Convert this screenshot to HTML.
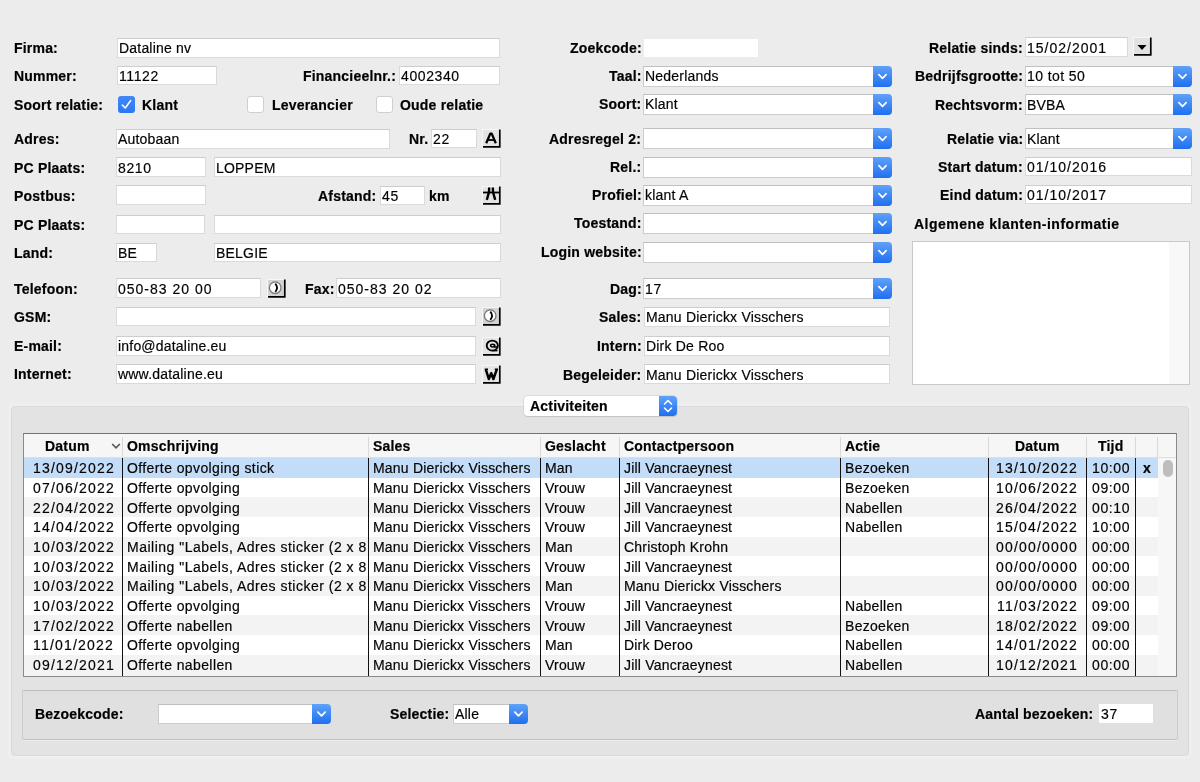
<!DOCTYPE html>
<html><head><meta charset="utf-8"><style>
html,body{margin:0;padding:0}
body{width:1200px;height:782px;overflow:hidden;position:relative;background:#ececec;font-family:"Liberation Sans", sans-serif;font-size:14px;color:#000}
.t{position:absolute;white-space:nowrap;will-change:transform;line-height:20px;font-size:14px;letter-spacing:0.2px}
.b{-webkit-text-stroke:0.2px #000}
.r{-webkit-text-stroke:0.2px #111}
.inp{position:absolute;box-sizing:border-box;background:#fff;border:1px solid #dadada;border-top-color:#cdcdcd}
.inpn{position:absolute;box-sizing:border-box;background:#fff}
.ddw{position:absolute;box-sizing:border-box;background:#fff;border:1px solid #cdcdcd;border-top-color:#c0c0c0;border-right:none}
.ddb{position:absolute;box-sizing:border-box;background:linear-gradient(#5fa2f9,#1f6ff0);border-radius:0 4px 4px 0;}
.ddb svg{position:absolute;left:0;top:0}
.cbc{position:absolute;width:17px;height:17px;border-radius:3px;background:linear-gradient(#3f89f7,#2c78f3)}
.cbc svg{position:absolute;left:0;top:0}
.cbu{position:absolute;box-sizing:border-box;width:17px;height:17px;border-radius:3px;background:#fff;border:1px solid #cfcfcf}
.ib{position:absolute;box-sizing:border-box;background:#dedede;border-left:2px solid #fafafa;border-top:2px solid #fafafa;border-right:2px solid #000;border-bottom:2px solid #000}
.ib svg{position:absolute;left:0;top:0}
.sep{position:absolute;width:1px;background:#111}
.hsep{position:absolute;width:1px;background:#d9d9d9}
</style></head><body>

<div class="t b" style="left:14px;top:38px;font-weight:bold;">Firma:</div>
<div class="t b" style="left:14px;top:66px;font-weight:bold;">Nummer:</div>
<div class="t b" style="left:14px;top:95px;font-weight:bold;">Soort relatie:</div>
<div class="t b" style="left:14px;top:129px;font-weight:bold;">Adres:</div>
<div class="t b" style="left:14px;top:158px;font-weight:bold;">PC Plaats:</div>
<div class="t b" style="left:14px;top:186px;font-weight:bold;">Postbus:</div>
<div class="t b" style="left:14px;top:215px;font-weight:bold;">PC Plaats:</div>
<div class="t b" style="left:14px;top:243px;font-weight:bold;">Land:</div>
<div class="t b" style="left:14px;top:279px;font-weight:bold;">Telefoon:</div>
<div class="t b" style="left:14px;top:307px;font-weight:bold;">GSM:</div>
<div class="t b" style="left:14px;top:336px;font-weight:bold;">E-mail:</div>
<div class="t b" style="left:14px;top:364px;font-weight:bold;">Internet:</div>
<div class="inp" style="left:117px;top:38px;width:383px;height:20px"></div>
<div class="t r" style="left:119px;top:38px;font-weight:normal;">Dataline nv</div>
<div class="inp" style="left:117px;top:66px;width:100px;height:19px"></div>
<div class="t r" style="left:119px;top:66px;font-weight:normal;letter-spacing:0.6px;">11122</div>
<div class="t b" style="right:803.5px;top:66px;font-weight:bold;">Financieelnr.:</div>
<div class="inp" style="left:399px;top:66px;width:101px;height:19px"></div>
<div class="t r" style="left:401px;top:66px;font-weight:normal;letter-spacing:0.6px;">4002340</div>
<div class="cbc" style="left:118px;top:96px"><svg width="17" height="17" viewBox="0 0 17 17"><path d="M4.3,9 L7.3,12 L12.6,4.6" fill="none" stroke="#fff" stroke-width="1.6" stroke-linecap="round" stroke-linejoin="round"/></svg></div>
<div class="t b" style="left:142px;top:95px;font-weight:bold;">Klant</div>
<div class="cbu" style="left:247px;top:96px"></div>
<div class="t b" style="left:272px;top:95px;font-weight:bold;">Leverancier</div>
<div class="cbu" style="left:376px;top:96px"></div>
<div class="t b" style="left:400px;top:95px;font-weight:bold;">Oude relatie</div>
<div class="inp" style="left:116px;top:129px;width:274px;height:20px"></div>
<div class="t r" style="left:118px;top:129px;font-weight:normal;">Autobaan</div>
<div class="t b" style="right:772px;top:129px;font-weight:bold;">Nr.</div>
<div class="inp" style="left:431px;top:129px;width:46px;height:19px"></div>
<div class="t r" style="left:433px;top:129px;font-weight:normal;letter-spacing:0.6px;">22</div>
<svg style="position:absolute;left:482px;top:129px" width="19" height="19" viewBox="0 0 19 19"><rect x="0" y="0" width="19" height="19" fill="#f7f7f7"/><rect x="1" y="1" width="16" height="16" fill="#e4e4e4"/><path d="M17.8,0.5 L17.8,17.8 L1,17.8" fill="none" stroke="#000" stroke-width="1.7"/><path d="M4.2,14.3 L8.3,4.6 L9.7,4.6 L13.8,14.3" fill="none" stroke="#000" stroke-width="2.3" stroke-linejoin="round"/><path d="M5.8,11 L12.2,11" stroke="#000" stroke-width="1.8"/></svg>
<div class="inp" style="left:116px;top:157px;width:90px;height:20px"></div>
<div class="t r" style="left:118px;top:158px;font-weight:normal;letter-spacing:0.6px;">8210</div>
<div class="inp" style="left:214px;top:157px;width:287px;height:20px"></div>
<div class="t r" style="left:216px;top:158px;font-weight:normal;">LOPPEM</div>
<div class="inp" style="left:116px;top:185px;width:90px;height:20px"></div>
<div class="t b" style="right:824px;top:186px;font-weight:bold;">Afstand:</div>
<div class="inp" style="left:380px;top:186px;width:45px;height:19px"></div>
<div class="t r" style="left:382px;top:186px;font-weight:normal;letter-spacing:0.6px;">45</div>
<div class="t b" style="left:429px;top:186px;font-weight:bold;">km</div>
<svg style="position:absolute;left:482px;top:186px" width="19" height="19" viewBox="0 0 19 19"><rect x="0" y="0" width="19" height="19" fill="#f7f7f7"/><rect x="1" y="1" width="16" height="16" fill="#e4e4e4"/><path d="M17.8,0.5 L17.8,17.8 L1,17.8" fill="none" stroke="#000" stroke-width="1.7"/><path d="M7.2,1.5 L7,6 L4.8,13.8 M10.8,1.5 L11,6 L13.2,13.8" fill="none" stroke="#000" stroke-width="2.4"/><path d="M1,6.5 L17,6.5" stroke="#000" stroke-width="1.8"/></svg>
<div class="inp" style="left:116px;top:215px;width:89px;height:19px"></div>
<div class="inp" style="left:214px;top:215px;width:287px;height:19px"></div>
<div class="inp" style="left:116px;top:243px;width:41px;height:19px"></div>
<div class="t r" style="left:118px;top:243px;font-weight:normal;">BE</div>
<div class="inp" style="left:214px;top:243px;width:287px;height:19px"></div>
<div class="t r" style="left:216px;top:243px;font-weight:normal;">BELGIE</div>
<div class="inp" style="left:116px;top:278px;width:145px;height:20px"></div>
<div class="t r" style="left:118px;top:279px;font-weight:normal;letter-spacing:1.0px;">050-83 20 00</div>
<svg style="position:absolute;left:267px;top:279px" width="19" height="19" viewBox="0 0 19 19"><rect x="0" y="0" width="19" height="19" fill="#f7f7f7"/><rect x="1" y="1" width="16" height="16" fill="#d2d2d2"/><path d="M17.8,0.5 L17.8,17.8 L1,17.8" fill="none" stroke="#000" stroke-width="1.7"/><circle cx="8.2" cy="8.7" r="5.8" fill="#fff" stroke="#777" stroke-width="1.3"/><path d="M8.3,4.6 Q11.8,8.7 8.3,12.8" fill="none" stroke="#000" stroke-width="1.8"/></svg>
<div class="t b" style="right:865.5px;top:279px;font-weight:bold;">Fax:</div>
<div class="inp" style="left:336px;top:278px;width:165px;height:20px"></div>
<div class="t r" style="left:338px;top:279px;font-weight:normal;letter-spacing:1.0px;">050-83 20 02</div>
<div class="inp" style="left:116px;top:307px;width:360px;height:19px"></div>
<svg style="position:absolute;left:482px;top:307px" width="19" height="19" viewBox="0 0 19 19"><rect x="0" y="0" width="19" height="19" fill="#f7f7f7"/><rect x="1" y="1" width="16" height="16" fill="#d2d2d2"/><path d="M17.8,0.5 L17.8,17.8 L1,17.8" fill="none" stroke="#000" stroke-width="1.7"/><circle cx="8.2" cy="8.7" r="5.8" fill="#fff" stroke="#777" stroke-width="1.3"/><path d="M8.3,4.6 Q11.8,8.7 8.3,12.8" fill="none" stroke="#000" stroke-width="1.8"/></svg>
<div class="inp" style="left:116px;top:336px;width:360px;height:20px"></div>
<div class="t r" style="left:118px;top:336px;font-weight:normal;">info@dataline.eu</div>
<svg style="position:absolute;left:482px;top:337px" width="19" height="19" viewBox="0 0 19 19"><rect x="0" y="0" width="19" height="19" fill="#f7f7f7"/><rect x="1" y="1" width="16" height="16" fill="#e4e4e4"/><path d="M17.8,0.5 L17.8,17.8 L1,17.8" fill="none" stroke="#000" stroke-width="1.7"/><ellipse cx="10.3" cy="8.6" rx="5.6" ry="5" fill="none" stroke="#000" stroke-width="1.9"/><ellipse cx="10.6" cy="8.6" rx="2" ry="1.4" fill="none" stroke="#000" stroke-width="1.5"/><path d="M12.6,7.5 L12.6,10 L16,10" fill="none" stroke="#000" stroke-width="1.4"/><path d="M10.3,13.6 L15.5,13.6" stroke="#000" stroke-width="1.6"/></svg>
<div class="inp" style="left:116px;top:364px;width:360px;height:20px"></div>
<div class="t r" style="left:118px;top:364px;font-weight:normal;">www.dataline.eu</div>
<svg style="position:absolute;left:482px;top:365px" width="19" height="19" viewBox="0 0 19 19"><rect x="0" y="0" width="19" height="19" fill="#f7f7f7"/><rect x="1" y="1" width="16" height="16" fill="#e4e4e4"/><path d="M17.8,0.5 L17.8,17.8 L1,17.8" fill="none" stroke="#000" stroke-width="1.7"/><path d="M3.8,4.3 L6.8,14 L9.2,8.2 L11.4,14 L14.8,4.3" fill="none" stroke="#000" stroke-width="2.5" stroke-linejoin="round"/><path d="M2.8,4.2 L6,4.2 M12.8,4.2 L16,4.2" stroke="#000" stroke-width="1.6"/></svg>
<div class="t b" style="right:558.5px;top:38px;font-weight:bold;">Zoekcode:</div>
<div class="t b" style="right:558.5px;top:66px;font-weight:bold;">Taal:</div>
<div class="t b" style="right:558.5px;top:94px;font-weight:bold;">Soort:</div>
<div class="t b" style="right:558.5px;top:129px;font-weight:bold;">Adresregel 2:</div>
<div class="t b" style="right:558.5px;top:157px;font-weight:bold;">Rel.:</div>
<div class="t b" style="right:558.5px;top:185px;font-weight:bold;">Profiel:</div>
<div class="t b" style="right:558.5px;top:213px;font-weight:bold;">Toestand:</div>
<div class="t b" style="right:558.5px;top:242px;font-weight:bold;">Login website:</div>
<div class="t b" style="right:558.5px;top:279px;font-weight:bold;">Dag:</div>
<div class="t b" style="right:558.5px;top:307px;font-weight:bold;">Sales:</div>
<div class="t b" style="right:558.5px;top:336px;font-weight:bold;">Intern:</div>
<div class="t b" style="right:558.5px;top:365px;font-weight:bold;">Begeleider:</div>
<div class="inpn" style="left:644px;top:39px;width:114px;height:18px"></div>
<div class="ddw" style="left:643px;top:66px;width:232px;height:21px"></div>
<div class="ddb" style="left:873px;top:66px;width:19px;height:21px"><svg width="19" height="21" viewBox="0 0 19 21"><path d="M5.9,8.7 L9.5,12.3 L13.1,8.7" fill="none" stroke="#fff" stroke-width="1.7" stroke-linecap="round" stroke-linejoin="round"/></svg></div>
<div class="t r" style="left:645px;top:66px;font-weight:normal;">Nederlands</div>
<div class="ddw" style="left:643px;top:94px;width:232px;height:21px"></div>
<div class="ddb" style="left:873px;top:94px;width:19px;height:21px"><svg width="19" height="21" viewBox="0 0 19 21"><path d="M5.9,8.7 L9.5,12.3 L13.1,8.7" fill="none" stroke="#fff" stroke-width="1.7" stroke-linecap="round" stroke-linejoin="round"/></svg></div>
<div class="t r" style="left:645px;top:94px;font-weight:normal;">Klant</div>
<div class="ddw" style="left:643px;top:128px;width:232px;height:21px"></div>
<div class="ddb" style="left:873px;top:128px;width:19px;height:21px"><svg width="19" height="21" viewBox="0 0 19 21"><path d="M5.9,8.7 L9.5,12.3 L13.1,8.7" fill="none" stroke="#fff" stroke-width="1.7" stroke-linecap="round" stroke-linejoin="round"/></svg></div>
<div class="ddw" style="left:643px;top:157px;width:232px;height:21px"></div>
<div class="ddb" style="left:873px;top:157px;width:19px;height:21px"><svg width="19" height="21" viewBox="0 0 19 21"><path d="M5.9,8.7 L9.5,12.3 L13.1,8.7" fill="none" stroke="#fff" stroke-width="1.7" stroke-linecap="round" stroke-linejoin="round"/></svg></div>
<div class="ddw" style="left:643px;top:185px;width:232px;height:21px"></div>
<div class="ddb" style="left:873px;top:185px;width:19px;height:21px"><svg width="19" height="21" viewBox="0 0 19 21"><path d="M5.9,8.7 L9.5,12.3 L13.1,8.7" fill="none" stroke="#fff" stroke-width="1.7" stroke-linecap="round" stroke-linejoin="round"/></svg></div>
<div class="t r" style="left:645px;top:185px;font-weight:normal;">klant A</div>
<div class="ddw" style="left:643px;top:213px;width:232px;height:21px"></div>
<div class="ddb" style="left:873px;top:213px;width:19px;height:21px"><svg width="19" height="21" viewBox="0 0 19 21"><path d="M5.9,8.7 L9.5,12.3 L13.1,8.7" fill="none" stroke="#fff" stroke-width="1.7" stroke-linecap="round" stroke-linejoin="round"/></svg></div>
<div class="ddw" style="left:643px;top:242px;width:232px;height:21px"></div>
<div class="ddb" style="left:873px;top:242px;width:19px;height:21px"><svg width="19" height="21" viewBox="0 0 19 21"><path d="M5.9,8.7 L9.5,12.3 L13.1,8.7" fill="none" stroke="#fff" stroke-width="1.7" stroke-linecap="round" stroke-linejoin="round"/></svg></div>
<div class="ddw" style="left:643px;top:278px;width:232px;height:21px"></div>
<div class="ddb" style="left:873px;top:278px;width:19px;height:21px"><svg width="19" height="21" viewBox="0 0 19 21"><path d="M5.9,8.7 L9.5,12.3 L13.1,8.7" fill="none" stroke="#fff" stroke-width="1.7" stroke-linecap="round" stroke-linejoin="round"/></svg></div>
<div class="t r" style="left:645px;top:279px;font-weight:normal;letter-spacing:0.6px;">17</div>
<div class="inp" style="left:644px;top:307px;width:246px;height:20px"></div>
<div class="t r" style="left:646px;top:307px;font-weight:normal;">Manu Dierickx Visschers</div>
<div class="inp" style="left:644px;top:336px;width:246px;height:20px"></div>
<div class="t r" style="left:646px;top:336px;font-weight:normal;">Dirk De Roo</div>
<div class="inp" style="left:644px;top:364px;width:246px;height:20px"></div>
<div class="t r" style="left:646px;top:365px;font-weight:normal;">Manu Dierickx Visschers</div>
<div class="t b" style="right:177px;top:38px;font-weight:bold;">Relatie sinds:</div>
<div class="t b" style="right:177px;top:66px;font-weight:bold;">Bedrijfsgrootte:</div>
<div class="t b" style="right:177px;top:95px;font-weight:bold;">Rechtsvorm:</div>
<div class="t b" style="right:177px;top:129px;font-weight:bold;">Relatie via:</div>
<div class="t b" style="right:177px;top:157px;font-weight:bold;">Start datum:</div>
<div class="t b" style="right:177px;top:185px;font-weight:bold;">Eind datum:</div>
<div class="inp" style="left:1025px;top:37px;width:103px;height:20px"></div>
<div class="t r" style="left:1027px;top:38px;font-weight:normal;letter-spacing:1px;">15/02/2001</div>
<svg style="position:absolute;left:1133px;top:37px" width="19" height="19" viewBox="0 0 19 19"><rect x="0" y="0" width="19" height="19" fill="#f7f7f7"/><rect x="1" y="1" width="16" height="16" fill="#e2e2e2"/><path d="M17.8,0.5 L17.8,17.8 L1,17.8" fill="none" stroke="#000" stroke-width="1.7"/><path d="M4.5,8 L13.5,8 L9,13 Z" fill="#000"/></svg>
<div class="ddw" style="left:1025px;top:66px;width:150px;height:21px"></div>
<div class="ddb" style="left:1173px;top:66px;width:19px;height:21px"><svg width="19" height="21" viewBox="0 0 19 21"><path d="M5.9,8.7 L9.5,12.3 L13.1,8.7" fill="none" stroke="#fff" stroke-width="1.7" stroke-linecap="round" stroke-linejoin="round"/></svg></div>
<div class="t r" style="left:1027px;top:66px;font-weight:normal;letter-spacing:0.4px;">10 tot 50</div>
<div class="ddw" style="left:1025px;top:94px;width:150px;height:21px"></div>
<div class="ddb" style="left:1173px;top:94px;width:19px;height:21px"><svg width="19" height="21" viewBox="0 0 19 21"><path d="M5.9,8.7 L9.5,12.3 L13.1,8.7" fill="none" stroke="#fff" stroke-width="1.7" stroke-linecap="round" stroke-linejoin="round"/></svg></div>
<div class="t r" style="left:1027px;top:95px;font-weight:normal;">BVBA</div>
<div class="ddw" style="left:1025px;top:128px;width:150px;height:21px"></div>
<div class="ddb" style="left:1173px;top:128px;width:19px;height:21px"><svg width="19" height="21" viewBox="0 0 19 21"><path d="M5.9,8.7 L9.5,12.3 L13.1,8.7" fill="none" stroke="#fff" stroke-width="1.7" stroke-linecap="round" stroke-linejoin="round"/></svg></div>
<div class="t r" style="left:1027px;top:129px;font-weight:normal;">Klant</div>
<div class="inp" style="left:1025px;top:157px;width:167px;height:19px"></div>
<div class="t r" style="left:1027px;top:157px;font-weight:normal;letter-spacing:1px;">01/10/2016</div>
<div class="inp" style="left:1025px;top:185px;width:167px;height:19px"></div>
<div class="t r" style="left:1027px;top:185px;font-weight:normal;letter-spacing:1px;">01/10/2017</div>
<div class="t b" style="left:914px;top:214px;font-weight:bold;letter-spacing:0.5px;">Algemene klanten-informatie</div>
<div style="position:absolute;left:912px;top:241px;width:278px;height:144px;box-sizing:border-box;background:#fff;border:1px solid #c9c9c9"></div>
<div style="position:absolute;left:1169px;top:242px;width:20px;height:142px;background:#f8f8f8"></div>
<div style="position:absolute;left:8px;top:403px;width:1184px;height:356px;box-sizing:border-box;border-radius:6px;background:#efefef"></div>
<div style="position:absolute;left:11px;top:406px;width:1178px;height:350px;box-sizing:border-box;border-radius:4px;background:#e3e3e3;border:1px solid #dadada"></div>
<div style="position:absolute;left:524px;top:396px;width:153px;height:20px;box-sizing:border-box;border-radius:4px;background:#fff;box-shadow:0 0 0 0.5px #c8c8c8, 0 1px 1px rgba(0,0,0,0.15);overflow:hidden"><div style="position:absolute;right:0;top:0;width:18px;height:20px;background:linear-gradient(#5fa2f9,#1f6ff0)"><svg width="18" height="20" viewBox="0 0 18 20"><path d="M5.5,8 L9,4.5 L12.5,8 M5.5,12 L9,15.5 L12.5,12" fill="none" stroke="#fff" stroke-width="1.6" stroke-linecap="round" stroke-linejoin="round"/></svg></div></div>
<div class="t b" style="left:530px;top:396px;font-weight:bold;">Activiteiten</div>
<div style="position:absolute;left:23px;top:433px;width:1154px;height:244px;box-sizing:border-box;border:1px solid #8a8a8a;border-top-color:#747474;background:#fff;overflow:hidden">
<div style="position:absolute;left:0;top:0;width:1200px;height:23px;background:#f6f6f6;border-bottom:1px solid #dedede"></div>
<div class="hsep" style="left:98px;top:3px;height:20px"></div>
<div class="hsep" style="left:344px;top:3px;height:20px"></div>
<div class="hsep" style="left:516px;top:3px;height:20px"></div>
<div class="hsep" style="left:595px;top:3px;height:20px"></div>
<div class="hsep" style="left:816px;top:3px;height:20px"></div>
<div class="hsep" style="left:964px;top:3px;height:20px"></div>
<div class="hsep" style="left:1062px;top:3px;height:20px"></div>
<div class="hsep" style="left:1111px;top:3px;height:20px"></div>
<div class="hsep" style="left:1133px;top:3px;height:20px"></div>
<div style="position:absolute;left:0;top:24px;width:1134px;height:20px;background:#c3dcf8"></div>
<div style="position:absolute;left:0;top:44px;width:1134px;height:19px;background:#ffffff"></div>
<div style="position:absolute;left:0;top:63px;width:1134px;height:20px;background:#f3f3f3"></div>
<div style="position:absolute;left:0;top:83px;width:1134px;height:20px;background:#ffffff"></div>
<div style="position:absolute;left:0;top:103px;width:1134px;height:19px;background:#f3f3f3"></div>
<div style="position:absolute;left:0;top:122px;width:1134px;height:20px;background:#ffffff"></div>
<div style="position:absolute;left:0;top:142px;width:1134px;height:20px;background:#f3f3f3"></div>
<div style="position:absolute;left:0;top:162px;width:1134px;height:19px;background:#ffffff"></div>
<div style="position:absolute;left:0;top:181px;width:1134px;height:20px;background:#f3f3f3"></div>
<div style="position:absolute;left:0;top:201px;width:1134px;height:20px;background:#ffffff"></div>
<div style="position:absolute;left:0;top:221px;width:1134px;height:30px;background:#f3f3f3"></div>
<div style="position:absolute;left:1134px;top:24px;width:30px;height:400px;background:#f7f7f7"></div>
<div style="position:absolute;left:1139px;top:26px;width:10px;height:17px;border-radius:5px;background:#bdbdbd"></div>
<div class="sep" style="left:98px;top:24px;height:300px"></div>
<div class="sep" style="left:344px;top:24px;height:300px"></div>
<div class="sep" style="left:516px;top:24px;height:300px"></div>
<div class="sep" style="left:595px;top:24px;height:300px"></div>
<div class="sep" style="left:816px;top:24px;height:300px"></div>
<div class="sep" style="left:964px;top:24px;height:300px"></div>
<div class="sep" style="left:1062px;top:24px;height:300px"></div>
<div class="sep" style="left:1111px;top:24px;height:300px"></div>
</div>
<div class="t b" style="left:45px;top:436px;font-weight:bold;">Datum</div>
<svg style="position:absolute;left:111px;top:442px" width="10" height="8" viewBox="0 0 10 8"><path d="M1.2,2 L5,5.8 L8.8,2" fill="none" stroke="#555" stroke-width="1.6"/></svg>
<div class="t b" style="left:127px;top:436px;font-weight:bold;">Omschrijving</div>
<div class="t b" style="left:373px;top:436px;font-weight:bold;">Sales</div>
<div class="t b" style="left:545px;top:436px;font-weight:bold;">Geslacht</div>
<div class="t b" style="left:624px;top:436px;font-weight:bold;">Contactpersoon</div>
<div class="t b" style="left:845px;top:436px;font-weight:bold;">Actie</div>
<div class="t b" style="left:1015px;top:436px;font-weight:bold;">Datum</div>
<div class="t b" style="left:1098px;top:436px;font-weight:bold;">Tijd</div>
<div class="t r" style="left:32.5px;top:458px;font-weight:normal;letter-spacing:1.2px;">13/09/2022</div>
<div class="t r" style="left:127px;top:458px;font-weight:normal;letter-spacing:0.4px;">Offerte opvolging stick</div>
<div class="t r" style="left:373px;top:458px;font-weight:normal;letter-spacing:0.2px;">Manu Dierickx Visschers</div>
<div class="t r" style="left:545px;top:458px;font-weight:normal;">Man</div>
<div class="t r" style="left:624px;top:458px;font-weight:normal;letter-spacing:0.2px;">Jill Vancraeynest</div>
<div class="t r" style="left:845px;top:458px;font-weight:normal;letter-spacing:0.3px;">Bezoeken</div>
<div class="t r" style="right:122px;top:458px;font-weight:normal;letter-spacing:1.2px;">13/10/2022</div>
<div class="t r" style="left:1091.5px;top:458px;font-weight:normal;letter-spacing:0.6px;">10:00</div>
<div class="t b" style="left:1143px;top:458px;font-weight:bold;">x</div>
<div class="t r" style="left:32.5px;top:478px;font-weight:normal;letter-spacing:1.2px;">07/06/2022</div>
<div class="t r" style="left:127px;top:478px;font-weight:normal;letter-spacing:0.4px;">Offerte opvolging</div>
<div class="t r" style="left:373px;top:478px;font-weight:normal;letter-spacing:0.2px;">Manu Dierickx Visschers</div>
<div class="t r" style="left:545px;top:478px;font-weight:normal;">Vrouw</div>
<div class="t r" style="left:624px;top:478px;font-weight:normal;letter-spacing:0.2px;">Jill Vancraeynest</div>
<div class="t r" style="left:845px;top:478px;font-weight:normal;letter-spacing:0.3px;">Bezoeken</div>
<div class="t r" style="right:122px;top:478px;font-weight:normal;letter-spacing:1.2px;">10/06/2022</div>
<div class="t r" style="left:1091.5px;top:478px;font-weight:normal;letter-spacing:0.6px;">09:00</div>
<div class="t r" style="left:32.5px;top:498px;font-weight:normal;letter-spacing:1.2px;">22/04/2022</div>
<div class="t r" style="left:127px;top:498px;font-weight:normal;letter-spacing:0.4px;">Offerte opvolging</div>
<div class="t r" style="left:373px;top:498px;font-weight:normal;letter-spacing:0.2px;">Manu Dierickx Visschers</div>
<div class="t r" style="left:545px;top:498px;font-weight:normal;">Vrouw</div>
<div class="t r" style="left:624px;top:498px;font-weight:normal;letter-spacing:0.2px;">Jill Vancraeynest</div>
<div class="t r" style="left:845px;top:498px;font-weight:normal;letter-spacing:0.3px;">Nabellen</div>
<div class="t r" style="right:122px;top:498px;font-weight:normal;letter-spacing:1.2px;">26/04/2022</div>
<div class="t r" style="left:1091.5px;top:498px;font-weight:normal;letter-spacing:0.6px;">00:10</div>
<div class="t r" style="left:32.5px;top:517px;font-weight:normal;letter-spacing:1.2px;">14/04/2022</div>
<div class="t r" style="left:127px;top:517px;font-weight:normal;letter-spacing:0.4px;">Offerte opvolging</div>
<div class="t r" style="left:373px;top:517px;font-weight:normal;letter-spacing:0.2px;">Manu Dierickx Visschers</div>
<div class="t r" style="left:545px;top:517px;font-weight:normal;">Vrouw</div>
<div class="t r" style="left:624px;top:517px;font-weight:normal;letter-spacing:0.2px;">Jill Vancraeynest</div>
<div class="t r" style="left:845px;top:517px;font-weight:normal;letter-spacing:0.3px;">Nabellen</div>
<div class="t r" style="right:122px;top:517px;font-weight:normal;letter-spacing:1.2px;">15/04/2022</div>
<div class="t r" style="left:1091.5px;top:517px;font-weight:normal;letter-spacing:0.6px;">10:00</div>
<div class="t r" style="left:32.5px;top:537px;font-weight:normal;letter-spacing:1.2px;">10/03/2022</div>
<div class="t r" style="left:127px;top:537px;width:240px;overflow:hidden;letter-spacing:0.5px">Mailing "Labels, Adres sticker (2 x 8)</div>
<div class="t r" style="left:373px;top:537px;font-weight:normal;letter-spacing:0.2px;">Manu Dierickx Visschers</div>
<div class="t r" style="left:545px;top:537px;font-weight:normal;">Man</div>
<div class="t r" style="left:624px;top:537px;font-weight:normal;letter-spacing:0.2px;">Christoph Krohn</div>
<div class="t r" style="right:122px;top:537px;font-weight:normal;letter-spacing:1.2px;">00/00/0000</div>
<div class="t r" style="left:1091.5px;top:537px;font-weight:normal;letter-spacing:0.6px;">00:00</div>
<div class="t r" style="left:32.5px;top:557px;font-weight:normal;letter-spacing:1.2px;">10/03/2022</div>
<div class="t r" style="left:127px;top:557px;width:240px;overflow:hidden;letter-spacing:0.5px">Mailing "Labels, Adres sticker (2 x 8)</div>
<div class="t r" style="left:373px;top:557px;font-weight:normal;letter-spacing:0.2px;">Manu Dierickx Visschers</div>
<div class="t r" style="left:545px;top:557px;font-weight:normal;">Vrouw</div>
<div class="t r" style="left:624px;top:557px;font-weight:normal;letter-spacing:0.2px;">Jill Vancraeynest</div>
<div class="t r" style="right:122px;top:557px;font-weight:normal;letter-spacing:1.2px;">00/00/0000</div>
<div class="t r" style="left:1091.5px;top:557px;font-weight:normal;letter-spacing:0.6px;">00:00</div>
<div class="t r" style="left:32.5px;top:576px;font-weight:normal;letter-spacing:1.2px;">10/03/2022</div>
<div class="t r" style="left:127px;top:576px;width:240px;overflow:hidden;letter-spacing:0.5px">Mailing "Labels, Adres sticker (2 x 8)</div>
<div class="t r" style="left:373px;top:576px;font-weight:normal;letter-spacing:0.2px;">Manu Dierickx Visschers</div>
<div class="t r" style="left:545px;top:576px;font-weight:normal;">Man</div>
<div class="t r" style="left:624px;top:576px;font-weight:normal;letter-spacing:0.2px;">Manu Dierickx Visschers</div>
<div class="t r" style="right:122px;top:576px;font-weight:normal;letter-spacing:1.2px;">00/00/0000</div>
<div class="t r" style="left:1091.5px;top:576px;font-weight:normal;letter-spacing:0.6px;">00:00</div>
<div class="t r" style="left:32.5px;top:596px;font-weight:normal;letter-spacing:1.2px;">10/03/2022</div>
<div class="t r" style="left:127px;top:596px;font-weight:normal;letter-spacing:0.4px;">Offerte opvolging</div>
<div class="t r" style="left:373px;top:596px;font-weight:normal;letter-spacing:0.2px;">Manu Dierickx Visschers</div>
<div class="t r" style="left:545px;top:596px;font-weight:normal;">Vrouw</div>
<div class="t r" style="left:624px;top:596px;font-weight:normal;letter-spacing:0.2px;">Jill Vancraeynest</div>
<div class="t r" style="left:845px;top:596px;font-weight:normal;letter-spacing:0.3px;">Nabellen</div>
<div class="t r" style="right:122px;top:596px;font-weight:normal;letter-spacing:1.2px;">11/03/2022</div>
<div class="t r" style="left:1091.5px;top:596px;font-weight:normal;letter-spacing:0.6px;">09:00</div>
<div class="t r" style="left:32.5px;top:616px;font-weight:normal;letter-spacing:1.2px;">17/02/2022</div>
<div class="t r" style="left:127px;top:616px;font-weight:normal;letter-spacing:0.4px;">Offerte nabellen</div>
<div class="t r" style="left:373px;top:616px;font-weight:normal;letter-spacing:0.2px;">Manu Dierickx Visschers</div>
<div class="t r" style="left:545px;top:616px;font-weight:normal;">Vrouw</div>
<div class="t r" style="left:624px;top:616px;font-weight:normal;letter-spacing:0.2px;">Jill Vancraeynest</div>
<div class="t r" style="left:845px;top:616px;font-weight:normal;letter-spacing:0.3px;">Bezoeken</div>
<div class="t r" style="right:122px;top:616px;font-weight:normal;letter-spacing:1.2px;">18/02/2022</div>
<div class="t r" style="left:1091.5px;top:616px;font-weight:normal;letter-spacing:0.6px;">09:00</div>
<div class="t r" style="left:32.5px;top:635px;font-weight:normal;letter-spacing:1.2px;">11/01/2022</div>
<div class="t r" style="left:127px;top:635px;font-weight:normal;letter-spacing:0.4px;">Offerte opvolging</div>
<div class="t r" style="left:373px;top:635px;font-weight:normal;letter-spacing:0.2px;">Manu Dierickx Visschers</div>
<div class="t r" style="left:545px;top:635px;font-weight:normal;">Man</div>
<div class="t r" style="left:624px;top:635px;font-weight:normal;letter-spacing:0.2px;">Dirk Deroo</div>
<div class="t r" style="left:845px;top:635px;font-weight:normal;letter-spacing:0.3px;">Nabellen</div>
<div class="t r" style="right:122px;top:635px;font-weight:normal;letter-spacing:1.2px;">14/01/2022</div>
<div class="t r" style="left:1091.5px;top:635px;font-weight:normal;letter-spacing:0.6px;">00:00</div>
<div class="t r" style="left:32.5px;top:655px;font-weight:normal;letter-spacing:1.2px;">09/12/2021</div>
<div class="t r" style="left:127px;top:655px;font-weight:normal;letter-spacing:0.4px;">Offerte nabellen</div>
<div class="t r" style="left:373px;top:655px;font-weight:normal;letter-spacing:0.2px;">Manu Dierickx Visschers</div>
<div class="t r" style="left:545px;top:655px;font-weight:normal;">Vrouw</div>
<div class="t r" style="left:624px;top:655px;font-weight:normal;letter-spacing:0.2px;">Jill Vancraeynest</div>
<div class="t r" style="left:845px;top:655px;font-weight:normal;letter-spacing:0.3px;">Nabellen</div>
<div class="t r" style="right:122px;top:655px;font-weight:normal;letter-spacing:1.2px;">10/12/2021</div>
<div class="t r" style="left:1091.5px;top:655px;font-weight:normal;letter-spacing:0.6px;">00:00</div>
<div style="position:absolute;left:22px;top:690px;width:1156px;height:50px;box-sizing:border-box;background:#e0e0e0;border:1px solid #cbcbcb;border-top-color:#bdbdbd;border-bottom-color:#c2c2c2;border-radius:2px;box-shadow:0 1px 0 #ececec"></div>
<div class="t b" style="left:35px;top:704px;font-weight:bold;">Bezoekcode:</div>
<div class="ddw" style="left:158px;top:704px;width:156px;height:20px"></div>
<div class="ddb" style="left:312px;top:704px;width:19px;height:20px"><svg width="19" height="20" viewBox="0 0 19 20"><path d="M5.9,8.2 L9.5,11.8 L13.1,8.2" fill="none" stroke="#fff" stroke-width="1.7" stroke-linecap="round" stroke-linejoin="round"/></svg></div>
<div class="t b" style="right:751px;top:704px;font-weight:bold;">Selectie:</div>
<div class="ddw" style="left:453px;top:704px;width:58px;height:20px"></div>
<div class="ddb" style="left:509px;top:704px;width:19px;height:20px"><svg width="19" height="20" viewBox="0 0 19 20"><path d="M5.9,8.2 L9.5,11.8 L13.1,8.2" fill="none" stroke="#fff" stroke-width="1.7" stroke-linecap="round" stroke-linejoin="round"/></svg></div>
<div class="t r" style="left:455px;top:704px;font-weight:normal;">Alle</div>
<div class="t b" style="left:975px;top:704px;font-weight:bold;">Aantal bezoeken:</div>
<div class="inpn" style="left:1099px;top:704px;width:54px;height:19px"></div>
<div class="t r" style="left:1101px;top:704px;font-weight:normal;letter-spacing:0.6px;">37</div>
</body></html>
